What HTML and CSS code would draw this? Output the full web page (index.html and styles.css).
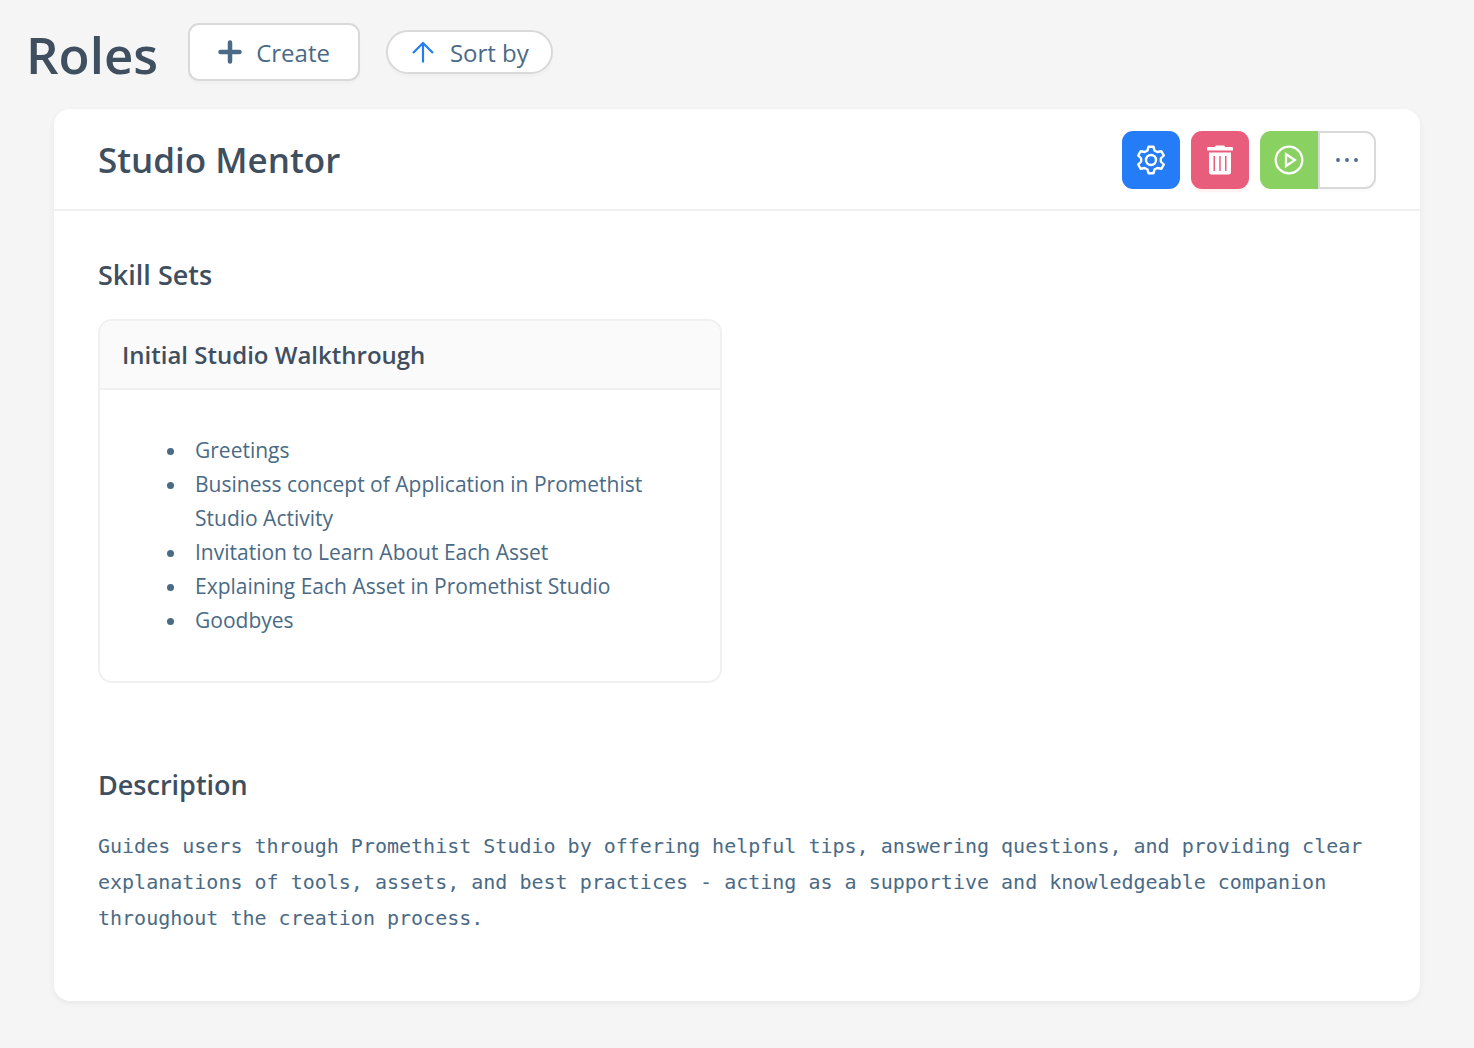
FILE: index.html
```html
<!DOCTYPE html>
<html lang="en">
<head>
  <meta charset="UTF-8" />
  <meta name="viewport" content="width=device-width, initial-scale=1.0" />
  <title>Roles</title>
  <link rel="stylesheet" href="styles.css">
</head>
<body>
  <header class="page-header">
    <h1>Roles</h1>
    <button type="button" class="btn create-btn">
      <svg width="24" height="24" viewBox="0 0 24 24" fill="none" stroke="currentColor" stroke-width="4.500" stroke-linecap="round">
        <path d="M12 2.500v19M2.500 12h19" />
      </svg>
      Create
    </button>
    <button type="button" class="btn sort-btn">
      <svg width="22" height="22" viewBox="0 0 22 22" fill="none" stroke="currentColor" stroke-width="2.200">
        <path d="M11 21.500V2M1 12L11 2l10 10" />
      </svg>
      Sort by
    </button>
  </header>

  <main class="card role">
    <div class="role-header">
      <h2>Studio Mentor</h2>
      <div class="actions">
        <button type="button" class="icon-btn settings" aria-label="Settings">
          <svg width="30" height="30" viewBox="-15 -15 30 30" fill="none" stroke="currentColor" stroke-width="2.400" stroke-linejoin="round">
            <path d="M-3.500-9.500L-2.500-13.300h5L3.500-9.500L6.300-8L10.300-8.800L12.800-4.500L9.800-1.500V1.500L12.800 4.500L10.300 8.800L6.300 8L3.500 9.500L2.500 13.300h-5L-3.500 9.500L-6.300 8L-10.300 8.800L-12.800 4.500L-9.800 1.500V-1.500L-12.800-4.500L-10.300-8.800L-6.300-8Z" />
            <circle r="5" />
          </svg>
        </button>
        <button type="button" class="icon-btn delete" aria-label="Delete">
          <svg width="26" height="30" viewBox="0 0 26 30" fill="currentColor">
            <path d="M9 .5h8q1 0 1 1.500h7q1 0 1 1v2.500H0V3q0-1 1-1h7q0-1.500 1-1.500z" />
            <path fill-rule="evenodd" d="M2 7.500h22V27q0 2.500-2.500 2.500h-17Q2 29.500 2 27zM6.500 11v15h1.500V11zM12.200 11v15h1.500V11zM18 11v15h1.500V11z" />
          </svg>
        </button>
        <div class="btn-group">
          <button type="button" class="icon-btn run" aria-label="Run">
            <svg width="30" height="30" viewBox="0 0 30 30" fill="none" stroke="currentColor" stroke-width="2.300">
              <circle cx="15" cy="15" r="13.300" />
              <path d="M12 9.200v11.800l8.800-5.900z" />
            </svg>
          </button>
          <button type="button" class="icon-btn more" aria-label="More">
            <svg width="24" height="6" viewBox="0 0 24 6" fill="currentColor">
              <circle cx="3" cy="3" r="1.900" />
              <circle cx="12" cy="3" r="1.900" />
              <circle cx="21" cy="3" r="1.900" />
            </svg>
          </button>
        </div>
      </div>
    </div>

    <div class="role-body">
      <section class="skill-sets">
        <h3>Skill Sets</h3>
        <div class="skill-grid">
          <article class="skill-card">
            <h4>Initial Studio Walkthrough</h4>
            <ul>
              <li>Greetings</li>
              <li>Business concept of Application in Promethist Studio Activity</li>
              <li>Invitation to Learn About Each Asset</li>
              <li>Explaining Each Asset in Promethist Studio</li>
              <li>Goodbyes</li>
            </ul>
          </article>
        </div>
      </section>

      <section>
        <h3>Description</h3>
        <p class="description">Guides users through Promethist Studio by offering helpful tips, answering questions, and providing clear explanations of tools, assets, and best practices - acting as a supportive and knowledgeable companion throughout the creation process.</p>
      </section>
    </div>
  </main>
</body>
</html>
```
FILE: styles.css
```css
:root {
  --heading-color: #3f4f5f;
  --text-color: #4a6a85;
  --border-color: #d9d9d9;
  --line-color: #f0f0f0;
  --bg-color: #f5f5f5;
}

* {
  box-sizing: border-box;
}

body {
  margin: 0;
  padding: 22px 54px 46px;
  font-family: "Segoe UI", "Open Sans", "Noto Sans", sans-serif;
  font-size: 21px;
  color: var(--text-color);
  background: var(--bg-color);
}

h1, h2, h3, h4 {
  margin: 0;
  font-weight: 600;
  color: var(--heading-color);
}

h1 {
  padding-top: 4px;
  font-size: 51px;
  line-height: 56px;
}

h2 {
  font-size: 35px;
  line-height: 44px;
}

h3 {
  font-size: 27px;
  line-height: 36px;
}

button {
  font: inherit;
  cursor: pointer;
}

svg {
  display: block;
  flex: none;
}

.page-header {
  display: flex;
  align-items: center;
  margin: 0 -28px 27px;
}

.btn {
  display: flex;
  align-items: center;
  justify-content: center;
  font-size: 24px;
  color: var(--text-color);
  background: white;
  border: 2px solid var(--border-color);
  box-shadow: 0 3px 2px rgba(0, 0, 0, 0.02);
}

.create-btn {
  height: 58px;
  margin-left: 30px;
  padding: 0 28px;
  gap: 14px;
  border-radius: 11px;
}

.sort-btn {
  height: 44px;
  margin-left: 26px;
  padding: 0 22px 0 24px;
  gap: 16px;
  border-radius: 22px;
}

.sort-btn svg {
  color: #247cf7;
}

.card {
  background: white;
  border-radius: 16px;
  box-shadow: 0 2px 6px rgba(0, 0, 0, 0.06);
}

.role-header {
  display: flex;
  align-items: center;
  justify-content: space-between;
  padding: 22px 44px 20px;
  border-bottom: 2px solid var(--line-color);
}

.actions {
  display: flex;
  gap: 11px;
}

.icon-btn {
  display: flex;
  align-items: center;
  justify-content: center;
  width: 58px;
  height: 58px;
  padding: 0;
  border: none;
  border-radius: 11px;
  color: white;
}

.settings {
  background: #247cf7;
}

.delete {
  background: #e85d7c;
  box-shadow: 0 3px 2px rgba(255, 38, 5, 0.06);
}

.btn-group {
  display: flex;
}

.run {
  background: #89d160;
  border-radius: 11px 0 0 11px;
}

.more {
  color: var(--text-color);
  background: white;
  border: 2px solid var(--border-color);
  border-radius: 0 11px 11px 0;
  box-shadow: 0 3px 2px rgba(0, 0, 0, 0.02);
}

.role-body {
  padding: 46px 44px 65px;
}

.skill-sets {
  margin-bottom: 84px;
}

.skill-grid {
  display: grid;
  grid-template-columns: 1fr 1fr;
  gap: 30px;
  margin-top: 26px;
}

.skill-card {
  border: 2px solid var(--line-color);
  border-radius: 14px;
  overflow: hidden;
}

h4 {
  padding: 16px 22px 15px;
  font-size: 24px;
  line-height: 36px;
  background: #fafafa;
  border-bottom: 2px solid var(--line-color);
}

ul {
  margin: 0;
  padding: 43px 66px 44px 88px;
  line-height: 34px;
}

li {
  padding-left: 7px;
}

.description {
  margin: 25px 0 0;
  font-family: "DejaVu Sans Mono", monospace;
  font-size: 20px;
  line-height: 36px;
}
```
